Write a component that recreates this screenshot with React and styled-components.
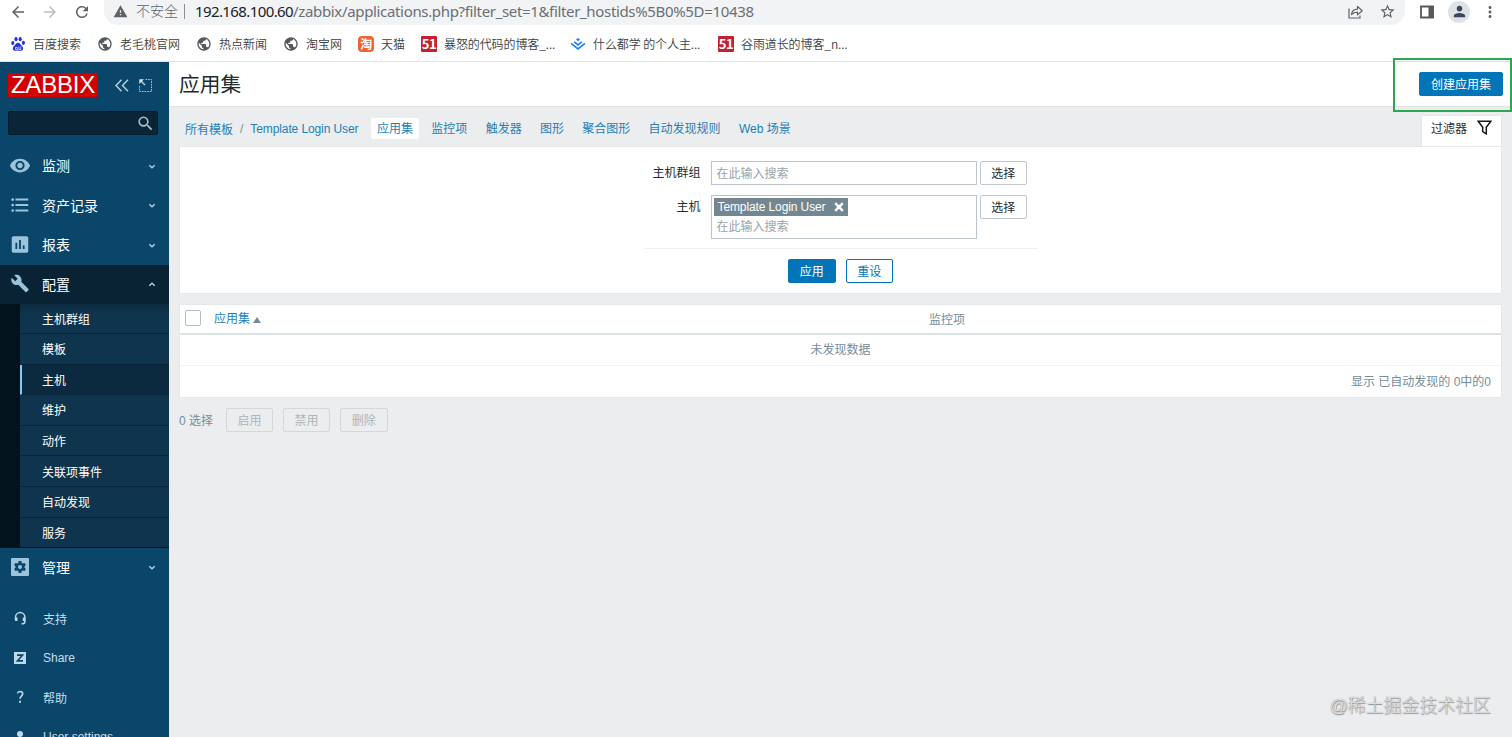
import styled, { createGlobalStyle, css } from "styled-components";
import {
  MdArrowBack,
  MdArrowForward,
  MdRefresh,
  MdWarning,
  MdStarBorder,
  MdMoreVert,
  MdPerson,
  MdPublic,
  MdRemoveRedEye,
  MdFormatListBulleted,
  MdInsertChart,
  MdBuild,
  MdSearch,
} from "react-icons/md";

const GlobalStyle = createGlobalStyle`
  * {
    box-sizing: border-box;
  }
  body {
    margin: 0;
    overflow: hidden;
    font-family: "Liberation Sans", "Noto Sans CJK SC", sans-serif;
    font-size: 12px;
    color: #1f2c33;
  }
  svg {
    display: block;
    flex: none;
  }
`;

const Page = styled.div`
  position: relative;
  width: 1512px;
  height: 737px;
  display: flex;
  flex-direction: column;
  overflow: hidden;
  background-color: #ebedef;
  white-space: nowrap;
`;

/* browser */
const Browser = styled.header`
  height: 62px;
  flex: none;
  background-color: #fff;
  border-bottom: 1px solid #dfe1e3;
`;
const AddressRow = styled.div`
  height: 25px;
  display: flex;
  color: #5f6368;
`;
const NavIcons = styled.div`
  width: 104px;
  height: 23px;
  padding-left: 9px;
  display: flex;
  align-items: center;
  gap: 14px;
`;
const AddressBar = styled.div`
  width: 1301px;
  height: 25px;
  padding: 0 9px 2px 9px;
  display: flex;
  align-items: center;
  border-radius: 0 0 14px 14px;
  background-color: #f1f3f4;
`;
const Unsafe = styled.span`
  margin: -3px 0 0 8px;
  font-family: "Noto Sans CJK SC", sans-serif;
  font-size: 14px;
  font-weight: 300;
`;
const Bar = styled.span`
  width: 1px;
  height: 15px;
  margin: 0 10px 0 6px;
  background-color: #8b8f93;
`;
const Url = styled.span`
  flex: 1;
  margin-top: -2px;
  font-family: "Noto Sans", sans-serif;
  font-size: 15px;
  letter-spacing: -0.34px;
  color: #6b6f74;
  b {
    font-weight: 400;
    letter-spacing: -0.6px;
    color: #202124;
  }
`;
const BarActions = styled.div`
  display: flex;
  align-items: center;
  gap: 15px;
`;
const BrowserActions = styled.div`
  height: 23px;
  padding-left: 14px;
  display: flex;
  align-items: center;
  gap: 13px;
  svg:last-child {
    margin-left: -2px;
  }
`;
const Avatar = styled.span`
  width: 22px;
  height: 22px;
  padding-left: 2px;
  display: flex;
  align-items: center;
  justify-content: center;
  border-radius: 50%;
  background-color: #dee1e6;
  color: #3c4658;
`;
const Bookmarks = styled.div`
  height: 36px;
  padding: 1px 0 0 10px;
  display: flex;
  align-items: center;
  gap: 16px;
`;
const Bookmark = styled.div`
  display: flex;
  align-items: center;
  gap: 7px;
  color: #3c4043;
  font-family: "Noto Sans CJK SC", sans-serif;
  font-weight: 350;
  > svg {
    color: #55595d;
  }
  span {
    width: ${({ $width }) => $width}px;
    margin-top: -1px;
    letter-spacing: ${({ $width }) => ($width > 100 ? "-0.1px" : "0")};
  }
`;
const Badge = styled.i`
  width: 16px;
  height: 16px;
  flex: none;
  display: flex;
  align-items: center;
  justify-content: center;
  border-radius: ${({ $round }) => ($round ? "4px" : "1px")};
  background-color: ${({ $color }) => $color};
  color: #fff;
  font-style: normal;
  font-weight: 700;
  font-size: ${({ $round }) => ($round ? "12px" : "13px")};
  line-height: 16px;
  letter-spacing: -0.5px;
`;

/* zabbix */
const Layout = styled.div`
  flex: 1;
  min-height: 0;
  display: flex;
`;
const Sidebar = styled.aside`
  width: 169px;
  flex: none;
  overflow: hidden;
  background-color: #0a466a;
  color: #fff;
`;
const SidebarTop = styled.div`
  height: 49px;
  padding: 0 17px 3px 8px;
  display: flex;
  align-items: center;
`;
const Logo = styled.div`
  width: 90px;
  height: 24px;
  margin-right: 17px;
  display: flex;
  align-items: center;
  justify-content: center;
  background-color: #d40000;
  font-family: "Liberation Sans", sans-serif;
  font-size: 24px;
  line-height: 24px;
  letter-spacing: -0.2px;
`;
const SearchBox = styled.div`
  width: 150px;
  height: 24px;
  margin: 0 0 11px 8px;
  padding-right: 2px;
  display: flex;
  align-items: center;
  justify-content: flex-end;
  border: 1px solid #061c2b;
  border-radius: 2px;
  background-color: #0a2538;
  color: #a8bfce;
`;
const MenuItem = styled.div`
  height: 39.5px;
  padding: 0 13px 0 9px;
  display: flex;
  align-items: center;
  font-size: 14px;
  ${({ $active }) =>
    $active &&
    css`
      background-color: #0a2334;
    `}
  > svg:first-child {
    width: 22px;
    margin: -1px 11px 0 0;
    color: #9cc3dc;
  }
  > span {
    flex: 1;
    margin-top: -1px;
  }
`;
const SubMenu = styled.div`
  height: 243.5px;
  padding-left: 20px;
  background-color: #02131e;
`;
const SubItem = styled.div`
  height: 30.6px;
  padding-left: ${({ $active }) => ($active ? "20px" : "22px")};
  display: flex;
  align-items: center;
  border-bottom: 1px solid #082438;
  background-color: ${({ $active }) => ($active ? "#0b2a3f" : "#0f344d")};
  ${({ $active }) =>
    $active &&
    css`
      border-left: 2px solid #8ac8ee;
    `}
  &:first-child {
    height: 30px;
    background-image: linear-gradient(#0b2a3f, #0f344d 9px);
  }
  &:last-child {
    height: 29.5px;
    border-bottom: 0;
  }
`;
const FootMenu = styled.div`
  margin-top: 11.5px;
  color: #c9dcea;
`;
const FootItem = styled.div`
  height: 39.5px;
  padding-left: 12px;
  display: flex;
  align-items: center;
  > svg {
    margin-right: 15px;
  }
`;

const Main = styled.main`
  flex: 1;
  min-width: 0;
`;
const Title = styled.div`
  height: 45px;
  padding: 0 9px 0 10px;
  display: flex;
  align-items: center;
  justify-content: space-between;
  background-color: #fff;
  border-bottom: 1px solid #e0e4e6;
  h1 {
    margin: -2px 0 0;
    font-size: 20.7px;
    font-weight: 400;
  }
`;
const Button = styled.button`
  width: ${({ $width }) => $width || 47.5}px;
  height: 24px;
  padding: 2px 0 0;
  flex: none;
  border: 1px solid #0275b8;
  border-radius: 2px;
  background-color: #0275b8;
  color: #fff;
  font: inherit;
  line-height: 20px;
  ${({ $kind }) =>
    $kind === "plain" &&
    css`
      border-color: #c0c8cc;
      background-color: #fff;
      color: #1f2c33;
    `}
  ${({ $kind }) =>
    $kind === "outline" &&
    css`
      background-color: #fff;
      color: #0275b8;
    `}
  &:disabled {
    border-color: #d3d8da;
    background-color: transparent;
    color: #acb6bb;
  }
`;
const SubNav = styled.div`
  height: 39px;
  padding: 0 10px 0 16px;
  display: flex;
  align-items: flex-start;
  color: #1f7fb8;
`;
const Crumbs = styled.div`
  width: 186px;
  height: 22px;
  margin-top: 11px;
  display: flex;
  align-items: center;
  span:first-child {
    margin-top: -2px;
  }
  span:last-child {
    letter-spacing: -0.11px;
  }
  i {
    margin: 0 7px;
    font-style: normal;
    color: #768d99;
  }
`;
const Tabs = styled.div`
  flex: 1;
  margin-top: 11px;
  display: flex;
  gap: 6.3px;
`;
const Tab = styled.span`
  height: 21px;
  padding: 0 6px;
  line-height: 22px;
  border-radius: 2px;
  ${({ $active }) =>
    $active &&
    css`
      background-color: #fff;
    `}
`;
const FilterTab = styled.div`
  width: 81px;
  height: 31px;
  margin-top: 8px;
  padding: 0 9px 7px;
  display: flex;
  align-items: center;
  justify-content: space-between;
  background-color: #fff;
  border: 1px solid #e6e9eb;
  border-bottom: 0;
  color: #1f2c33;
`;
const Panel = styled.section`
  width: 1323px;
  margin-left: 10px;
  border: 1px solid #e4e8ea;
  background-color: #fff;
`;
const FilterPanel = styled(Panel)`
  height: 148px;
  padding-top: 14px;
  display: flex;
  flex-direction: column;
  align-items: center;
`;
const Form = styled.div`
  width: 394px;
  padding-bottom: 9px;
  display: grid;
  grid-template-columns: 64px 266px 47px;
  column-gap: 3px;
  row-gap: 10px;
  align-items: start;
  border-bottom: 1px solid #eef0f1;
  label {
    height: 24px;
    padding-right: 7px;
    line-height: 25px;
    text-align: right;
  }
`;
const Field = styled.div`
  height: ${({ $tall }) => ($tall ? 44 : 24)}px;
  padding: 2px;
  border: 1px solid #bcc4c9;
  color: #9aa3a8;
  p {
    margin: 0;
    padding-left: 3px;
    line-height: 20px;
  }
`;
const Chip = styled.span`
  width: 134px;
  height: 18px;
  margin-bottom: 1px;
  padding: 0 4px;
  display: flex;
  align-items: center;
  justify-content: space-between;
  background-color: #728791;
  color: #fff;
  letter-spacing: -0.11px;
`;
const FormButtons = styled.div`
  margin-top: 10px;
  display: flex;
  gap: 10px;
`;
const Table = styled(Panel)`
  height: 94px;
  margin-top: 10px;
  color: #768d99;
`;
const HeadRow = styled.div`
  height: 30px;
  padding: 0 5px 2px;
  display: grid;
  grid-template-columns: 29px 715px 1fr;
  align-items: center;
  border-bottom: 2px solid #dbe2e5;
`;
const Checkbox = styled.span`
  width: 16px;
  height: 16px;
  border: 1px solid #b4bfc5;
  border-radius: 2px;
`;
const SortLink = styled.span`
  margin-top: -1px;
  display: flex;
  align-items: center;
  gap: 3px;
  color: #1f7fb8;
  svg {
    margin-top: 4px;
  }
`;
const EmptyRow = styled.div`
  height: 31px;
  line-height: 30px;
  text-align: center;
  border-bottom: 1px solid #f0f2f3;
`;
const CountRow = styled.div`
  padding-right: 10px;
  line-height: 33px;
  text-align: right;
`;
const Actions = styled.div`
  margin: 10px 0 0 10px;
  display: flex;
  align-items: center;
  gap: 9.7px;
  color: #768d99;
  span {
    width: 37px;
    margin-top: -2px;
  }
`;
const Highlight = styled.div`
  position: absolute;
  left: 1393px;
  top: 58px;
  width: 119px;
  height: 54px;
  border: 2px solid #2aa84f;
`;
const Watermark = styled.div`
  position: absolute;
  right: 21px;
  bottom: 18px;
  font-size: 18px;
  font-weight: 300;
  line-height: 26px;
  letter-spacing: -0.1px;
  color: #dfe1e2;
  text-shadow: 0 0 1px #8d8d8d, 0.5px 0.5px 1px #8a8a8a;
`;

const Paw = () => (
  <svg width="16" height="16" viewBox="0 0 16 16" fill="#2932e1">
    <ellipse cx="2.8" cy="7" rx="1.6" ry="2.1" />
    <ellipse cx="6" cy="3.2" rx="1.6" ry="2.1" />
    <ellipse cx="10.2" cy="3.2" rx="1.6" ry="2.1" />
    <ellipse cx="13.4" cy="6.8" rx="1.6" ry="2.1" />
    <path d="M8 6.7c2 0 2.6 2 4 3.3 2 1.9 1.2 4.8-1 4.8-1.2 0-2-.3-3-.3s-1.8.3-3 .3c-2.2 0-3-2.9-1-4.8C5.4 8.7 6 6.7 8 6.7Z" />
    <path d="M5.500 11.500h1.800v2H5.500zM8.800 10.500v3h2v-3" fill="none" stroke="#fff" strokeWidth=".7" />
  </svg>
);
const Juejin = () => (
  <svg width="16" height="16" viewBox="0 0 16 16" fill="none" stroke="#1e80ff" strokeWidth="1.7">
    <path d="m1 7.300 7 5.500 7-5.500M4.200 5.800 8 8.800l3.800-3" />
    <path d="m8 2 2 1.600-2 1.600-2-1.600Z" fill="#1e80ff" stroke="none" />
  </svg>
);
const ShareIcon = () => (
  <svg width="17" height="16" viewBox="0 0 17 16" fill="none" stroke="#5f6368" strokeWidth="1.2">
    <path d="M2 4.500V14h11v-2.500" />
    <path
      d="M4.500 10.500c.3-3.700 2.500-5.300 6-5.400V2.400l4.700 4.300-4.700 4.200V8.200c-2.700 0-4.500.6-6 2.300Z"
      strokeLinejoin="round"
    />
  </svg>
);
const SidePanel = () => (
  <svg width="16" height="16" viewBox="0 0 16 16">
    <path d="M2 2.500h12v11H2z" fill="none" stroke="#55595d" strokeWidth="1.8" />
    <path d="M9.500 2h5v12h-5z" fill="#55595d" />
  </svg>
);
const Chevron = ({ up }) => (
  <svg width="8" height="6" viewBox="0 0 8 6" fill="none" stroke="#b5d3e6" strokeWidth="1.3">
    <path d={up ? "m1.300 4.800 2.700-2.600 2.700 2.600" : "m1.300 2.200 2.700 2.600 2.700-2.600"} />
  </svg>
);
const Collapse = () => (
  <svg width="14" height="13" viewBox="0 0 14 13" fill="none" stroke="#b9d3e3" strokeWidth="1.4">
    <path d="M6.500.8 1 6.500l5.500 5.700M13 .8 7.500 6.500l5.500 5.700" />
  </svg>
);
const KioskIcon = styled.svg`
  margin-left: 10px;
`;
const Kiosk = () => (
  <KioskIcon width="13" height="13" viewBox="0 0 13 13" fill="none" stroke="#a9c8da">
    <path d="M6.500.5h6v12H.5v-6" strokeDasharray="1.600 1" />
    <path d="m2 2 4 4" strokeWidth="1.6" />
    <path d="M.3.300h4.700L.3 5Z" fill="#d4e5ef" stroke="none" />
  </KioskIcon>
);
const GearBox = () => (
  <svg width="22" height="18" viewBox="0 0 22 18">
    <rect x="2" width="18" height="18" rx="1" fill="#9cc3dc" />
    <path
      d="M9.700 3h2.600l.4 1.900 1.100.6 1.800-.6 1.300 2.200-1.400 1.300v1.200l1.400 1.300-1.300 2.200-1.800-.6-1.100.6-.4 1.900H9.700l-.4-1.900-1.100-.6-1.800.6-1.300-2.200 1.400-1.300V8.400L5.100 7.100l1.300-2.200 1.800.6 1.100-.6Z"
      fill="#0a466a"
    />
    <circle cx="11" cy="9" r="2" fill="#9cc3dc" />
  </svg>
);
const Funnel = () => (
  <svg width="15" height="15" viewBox="0 0 15 15" fill="none" stroke="#1a1a1a" strokeWidth="1.5">
    <path d="M1.200 1.300h12.600L9.300 7.200v6.600l-3.600-2.200V7.200Z" />
  </svg>
);
const Headset = () => (
  <svg width="16" height="16" viewBox="0 0 16 16" fill="none" stroke="#c0d9e8" strokeWidth="1.5">
    <path d="M3.500 10V7.300a4.700 4.700 0 0 1 9.400 0v4.400c0 1.500-1 2.100-3.400 2.100" />
    <path d="M4.300 7.500v3.500M12 7.500v3.500" strokeWidth="2.4" />
  </svg>
);
const ZBox = () => (
  <svg width="16" height="16" viewBox="0 0 16 16">
    <path d="M2 2h12v12H2z" fill="#c0d9e8" />
    <path d="M5 5.200h5.500L5.500 10.800H11" fill="none" stroke="#0a466a" strokeWidth="1.7" />
  </svg>
);
const Question = () => (
  <svg width="16" height="16" viewBox="0 0 16 16" fill="none" stroke="#c0d9e8" strokeWidth="1.6">
    <path d="M5.400 4.400C5.700 3 6.700 2.500 8 2.500c1.600 0 2.700.9 2.700 2.300C10.700 7 8 7.200 8 9.800" />
    <path d="M8 11.700v2" strokeWidth="1.9" />
  </svg>
);
const User = () => (
  <svg width="16" height="16" viewBox="0 0 16 16" fill="#c0d9e8">
    <circle cx="8" cy="5" r="3" />
    <path d="M2.500 14c0-3 2-4.500 5.500-4.500s5.500 1.500 5.500 4.500Z" />
  </svg>
);

const bookmarks = [
  { icon: <Paw />, text: "百度搜索", width: 48 },
  { icon: <MdPublic size={16} />, text: "老毛桃官网", width: 60 },
  { icon: <MdPublic size={16} />, text: "热点新闻", width: 48 },
  { icon: <MdPublic size={16} />, text: "淘宝网", width: 36 },
  { icon: <Badge $color="#f2622e" $round>淘</Badge>, text: "天猫", width: 24 },
  { icon: <Badge $color="#c4202f">51</Badge>, text: "暴怒的代码的博客_...", width: 110 },
  { icon: <Juejin />, text: "什么都学 的个人主...", width: 109 },
  { icon: <Badge $color="#c4202f">51</Badge>, text: "谷雨道长的博客_n...", width: 108 },
];
const subItems = ["主机群组", "模板", "主机", "维护", "动作", "关联项事件", "自动发现", "服务"];
const tabs = ["应用集", "监控项", "触发器", "图形", "聚合图形", "自动发现规则", "Web 场景"];

function BrowserBar() {
  return (
    <Browser>
      <AddressRow>
        <NavIcons>
          <MdArrowBack size={18} />
          <MdArrowForward size={18} color="#bcbfc2" />
          <MdRefresh size={18} />
        </NavIcons>
        <AddressBar>
          <MdWarning size={15} />
          <Unsafe>不安全</Unsafe>
          <Bar />
          <Url>
            <b>192.168.100.60</b>
            /zabbix/applications.php?filter_set=1&amp;filter_hostids%5B0%5D=10438
          </Url>
          <BarActions>
            <ShareIcon />
            <MdStarBorder size={17} />
          </BarActions>
        </AddressBar>
        <BrowserActions>
          <SidePanel />
          <Avatar>
            <MdPerson size={17} />
          </Avatar>
          <MdMoreVert size={18} />
        </BrowserActions>
      </AddressRow>
      <Bookmarks>
        {bookmarks.map(({ icon, text, width }) => (
          <Bookmark key={text} $width={width}>
            {icon}
            <span>{text}</span>
          </Bookmark>
        ))}
      </Bookmarks>
    </Browser>
  );
}

function Menu() {
  return (
    <Sidebar>
      <SidebarTop>
        <Logo>ZABBIX</Logo>
        <Collapse />
        <Kiosk />
      </SidebarTop>
      <SearchBox>
        <MdSearch size={19} />
      </SearchBox>
      <MenuItem>
        <MdRemoveRedEye size={23} />
        <span>监测</span>
        <Chevron />
      </MenuItem>
      <MenuItem>
        <MdFormatListBulleted size={22} />
        <span>资产记录</span>
        <Chevron />
      </MenuItem>
      <MenuItem>
        <MdInsertChart size={23} />
        <span>报表</span>
        <Chevron />
      </MenuItem>
      <MenuItem $active>
        <MdBuild size={19} />
        <span>配置</span>
        <Chevron up />
      </MenuItem>
      <SubMenu>
        {subItems.map((text) => (
          <SubItem key={text} $active={text === "主机"}>
            {text}
          </SubItem>
        ))}
      </SubMenu>
      <MenuItem>
        <GearBox />
        <span>管理</span>
        <Chevron />
      </MenuItem>
      <FootMenu>
        <FootItem>
          <Headset />
          支持
        </FootItem>
        <FootItem>
          <ZBox />
          Share
        </FootItem>
        <FootItem>
          <Question />
          帮助
        </FootItem>
        <FootItem>
          <User />
          User settings
        </FootItem>
      </FootMenu>
    </Sidebar>
  );
}

function Filter() {
  return (
    <FilterPanel>
      <Form>
        <label>主机群组</label>
        <Field>
          <p>在此输入搜索</p>
        </Field>
        <Button $kind="plain">选择</Button>
        <label>主机</label>
        <Field $tall>
          <Chip>
            Template Login User
            <svg width="10" height="10" viewBox="0 0 10 10" stroke="#fff" strokeWidth="2.6">
              <path d="m1.200 1.200 7.600 7.600M8.800 1.200 1.200 8.800" />
            </svg>
          </Chip>
          <p>在此输入搜索</p>
        </Field>
        <Button $kind="plain">选择</Button>
      </Form>
      <FormButtons>
        <Button>应用</Button>
        <Button $kind="outline">重设</Button>
      </FormButtons>
    </FilterPanel>
  );
}

function App() {
  return (
    <Page>
      <GlobalStyle />
      <BrowserBar />
      <Layout>
        <Menu />
        <Main>
          <Title>
            <h1>应用集</h1>
            <Button $width={84}>创建应用集</Button>
          </Title>
          <SubNav>
            <Crumbs>
              <span>所有模板</span>
              <i>/</i>
              <span>Template Login User</span>
            </Crumbs>
            <Tabs>
              {tabs.map((text, index) => (
                <Tab key={text} $active={index === 0}>
                  {text}
                </Tab>
              ))}
            </Tabs>
            <FilterTab>
              过滤器
              <Funnel />
            </FilterTab>
          </SubNav>
          <Filter />
          <Table>
            <HeadRow>
              <Checkbox />
              <SortLink>
                应用集
                <svg width="8" height="6" viewBox="0 0 8 6">
                  <path d="M4 0 8 6H0Z" fill="#768d99" />
                </svg>
              </SortLink>
              <span>监控项</span>
            </HeadRow>
            <EmptyRow>未发现数据</EmptyRow>
            <CountRow>显示 已自动发现的 0中的0</CountRow>
          </Table>
          <Actions>
            <span>0 选择</span>
            <Button disabled>启用</Button>
            <Button disabled>禁用</Button>
            <Button disabled>删除</Button>
          </Actions>
        </Main>
      </Layout>
      <Highlight />
      <Watermark>@稀土掘金技术社区</Watermark>
    </Page>
  );
}

export default App;
